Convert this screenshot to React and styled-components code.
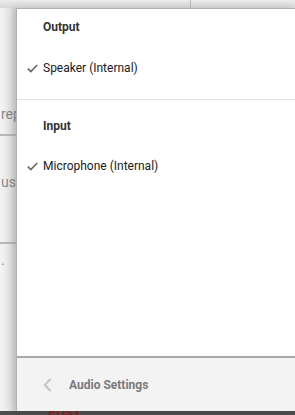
import styled, { createGlobalStyle } from 'styled-components';

const Global = createGlobalStyle`
html, body {
  margin: 0;
  padding: 0;
  width: 295px;
  height: 415px;
  overflow: hidden;
  font-family: Roboto, "Liberation Sans", Arial, sans-serif;
}
`;

const Page = styled.div`
position: relative;
width: 295px;
height: 415px;
background: linear-gradient(to right, #f4f4f4 0px, #e6e6e6 10px, #d2d2d2 16px);
display: flex;
flex-direction: column;
overflow: hidden;
`;

const TopBar = styled.div`
height: 8px;
display: flex;
flex-shrink: 0;
`;

const Tab = styled.div`
width: ${p => p.w};
flex: ${p => (p.w ? 'none' : 1)};
background: linear-gradient(#ececec, #d8d8d8);
border-left: ${p => (p.divider ? '1px solid #bdbdbd' : 'none')};
`;

const Behind = styled.div`
flex: 1;
display: flex;
flex-direction: column;
color: #8a8a8a;
font-size: 14px;
`;

const Snip = styled.div`
height: ${p => p.h}px;
display: flex;
align-items: flex-end;
padding-left: 1px;
border-bottom: ${p => (p.line ? '2px solid #b8b8b8' : 'none')};
`;

const BottomBand = styled.div`
height: 4px;
background: #4d4d4d;
flex-shrink: 0;
position: relative;
`;

const Post = styled.span`
position: absolute;
left: 48px;
top: -3px;
color: #8b1c1c;
font-weight: 700;
font-size: 13px;
line-height: 10px;
`;

const Menu = styled.div`
position: absolute;
left: 16px;
top: 8px;
right: 0;
bottom: 4px;
background: #fff;
border-left: 1px solid #b0b0b0;
border-top: 1px solid #b0b0b0;
box-shadow: -4px 0 8px rgba(0, 0, 0, 0.12);
display: flex;
flex-direction: column;
`;

const Section = styled.div`
padding: ${p => (p.divider ? '9px 0 22px' : '17px 0 0')};
border-bottom: ${p => (p.divider ? '1px solid #e4e4e4' : 'none')};
`;

const Heading = styled.div`
font-weight: 700;
font-size: 12px;
color: #333;
padding-left: 26px;
height: 18px;
line-height: 18px;
margin-bottom: ${p => p.gap}px;
`;

const Item = styled.div`
display: flex;
align-items: center;
height: 18px;
font-size: 12px;
color: #202124;
`;

const Check = styled.span`
width: 26px;
display: flex;
justify-content: flex-end;
padding-right: 5px;
box-sizing: border-box;
`;

const Body = styled.div`
flex: 1;
`;

const Footer = styled.div`
height: 53px;
background: #f3f3f3;
border-top: 2px solid #a8a8a8;
display: flex;
align-items: center;
padding-left: 26px;
gap: 17px;
font-size: 12px;
font-weight: 700;
color: #7a7a7a;
`;

function CheckMark() {
  return (
    <svg width="11" height="9" viewBox="0 0 11 9">
      <path d="M0.8 4.6 L3.8 7.6 L10.2 1" fill="none" stroke="#666" strokeWidth="1.6" />
    </svg>
  );
}

function Chevron() {
  return (
    <svg width="9" height="14" viewBox="0 0 9 14">
      <path d="M7.5 1 L1.8 7 L7.5 13" fill="none" stroke="#c4c4c4" strokeWidth="2" />
    </svg>
  );
}

export default function App() {
  return (
    <Page>
      <Global />
      <TopBar>
        <Tab w="190px" />
        <Tab divider />
      </TopBar>
      <Behind>
        <Snip h={114}>rep</Snip>
        <Snip h={12} line />
        <Snip h={54}>uss</Snip>
        <Snip h={52} line />
        <Snip h={24}>.</Snip>
        <Snip h={20} />
      </Behind>
      <BottomBand>
        <Post>POST</Post>
      </BottomBand>
      <Menu>
        <Section divider>
          <Heading gap={23}>Output</Heading>
          <Item>
            <Check><CheckMark /></Check>
            Speaker (Internal)
          </Item>
        </Section>
        <Body>
          <Section>
            <Heading gap={22}>Input</Heading>
            <Item>
              <Check><CheckMark /></Check>
              Microphone (Internal)
            </Item>
          </Section>
        </Body>
        <Footer>
          <Chevron />
          Audio Settings
        </Footer>
      </Menu>
    </Page>
  );
}
